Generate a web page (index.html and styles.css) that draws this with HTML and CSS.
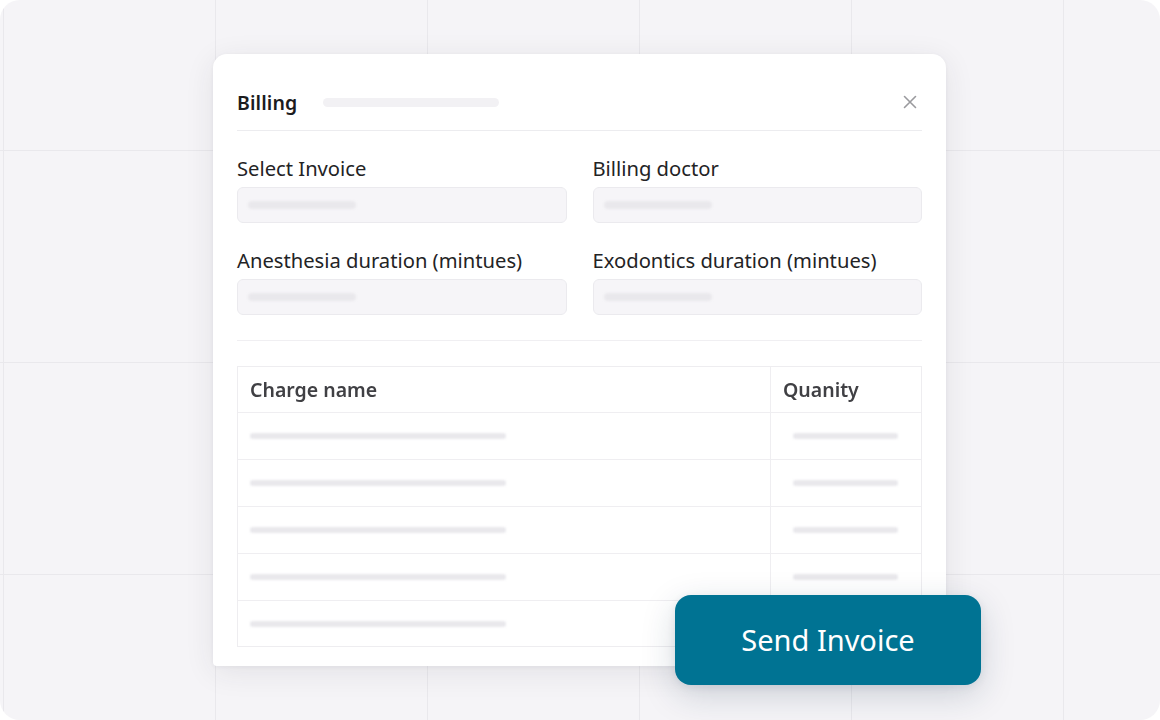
FILE: index.html
```html
<!DOCTYPE html>
<html>
<head>
<meta charset="utf-8">
<link rel="stylesheet" href="styles.css">
</head>
<body>
<div class="stage">
  <div class="modal">
    <div class="modal-head">
      <div class="title">Billing</div>
      <div class="title-bar"></div>
      <svg class="close" width="14" height="14" viewBox="0 0 14 14"><path d="M1.5 1.5L12.5 12.5M12.5 1.5L1.5 12.5" stroke="#9a9a9e" stroke-width="1.6" stroke-linecap="round"/></svg>
    </div>
    <div class="form">
      <div class="field">
        <div class="label">Select Invoice</div>
        <div class="input"><span class="ph"></span></div>
      </div>
      <div class="field">
        <div class="label">Billing doctor</div>
        <div class="input"><span class="ph"></span></div>
      </div>
      <div class="field">
        <div class="label">Anesthesia duration (mintues)</div>
        <div class="input"><span class="ph"></span></div>
      </div>
      <div class="field">
        <div class="label">Exodontics duration (mintues)</div>
        <div class="input"><span class="ph"></span></div>
      </div>
    </div>
    <div class="divider"></div>
    <div class="table">
      <div class="row head">
        <div class="cell name">Charge name</div>
        <div class="cell qty">Quanity</div>
      </div>
      <div class="row"><div class="cell name"><span class="bar"></span></div><div class="cell qty"><span class="bar"></span></div></div>
      <div class="row"><div class="cell name"><span class="bar"></span></div><div class="cell qty"><span class="bar"></span></div></div>
      <div class="row"><div class="cell name"><span class="bar"></span></div><div class="cell qty"><span class="bar"></span></div></div>
      <div class="row"><div class="cell name"><span class="bar"></span></div><div class="cell qty"><span class="bar"></span></div></div>
      <div class="row last"><div class="cell name"><span class="bar"></span></div><div class="cell qty"><span class="bar"></span></div></div>
    </div>
  </div>
  <button class="send">Send Invoice</button>
</div>
</body>
</html>
```
FILE: styles.css
```css
* { box-sizing: border-box; }
html, body { margin: 0; padding: 0; background: #ffffff; }
body { font-family: "Noto Sans", "Open Sans", sans-serif; }

.stage {
  position: relative;
  width: 1160px;
  height: 720px;
  border-radius: 20px;
  overflow: hidden;
  background-color: #f5f4f7;
  background-image:
    linear-gradient(to right, #e9e8ec 0, #e9e8ec 1px, transparent 1px),
    linear-gradient(to bottom, #e9e8ec 0, #e9e8ec 1px, transparent 1px);
  background-size: 212px 212px;
  background-position: 3px 150px;
  padding: 54px 0 0 213px;
}

.modal {
  width: 733px;
  height: 612px;
  background: #ffffff;
  border-radius: 14px 14px 4px 4px;
  box-shadow: 0 6px 30px rgba(40, 40, 60, 0.09), 0 1px 4px rgba(40, 40, 60, 0.05);
  padding: 0 24px;
}

.modal-head {
  height: 77px;
  display: flex;
  align-items: center;
  border-bottom: 1px solid #ececef;
  padding-top: 20px;
}
.title {
  font-size: 19.5px;
  font-weight: 600;
  color: #1c1c1e;
  letter-spacing: 0.1px;
}
.title-bar {
  width: 176px;
  height: 9px;
  border-radius: 5px;
  background: #f2f1f4;
  margin-left: 26px;
  filter: blur(0.6px);
}
.close { margin-left: auto; margin-right: 5px; }

.form {
  display: grid;
  grid-template-columns: 1fr 1fr;
  column-gap: 26px;
  row-gap: 24px;
  padding-top: 24px;
}
.label {
  font-size: 20.2px;
  color: #232325;
  line-height: 26px;
  margin-bottom: 6px;
}
.input {
  height: 36px;
  background: #f6f5f8;
  border: 1px solid #ebeaee;
  border-radius: 6px;
  display: flex;
  align-items: center;
  padding-left: 10px;
  filter: blur(0.4px);
}
.ph {
  width: 108px;
  height: 8px;
  border-radius: 4px;
  background: #e9e8ec;
  filter: blur(1px);
}

.divider {
  height: 1px;
  background: #f0eff2;
  margin-top: 25px;
  filter: blur(0.6px);
}

.table {
  margin-top: 25px;
  border: 1px solid #eeedf0;
  filter: blur(0.7px);
}
.row {
  display: flex;
  height: 47px;
  border-bottom: 1px solid #efeef1;
}
.row.head { height: 46px; }
.row.last { border-bottom: none; height: 45px; }
.cell {
  display: flex;
  align-items: center;
}
.cell.name {
  width: 533px;
  border-right: 1px solid #efeef1;
  padding-left: 12px;
}
.cell.qty {
  flex: 1;
  padding-left: 12px;
}
.row .cell.qty { padding-left: 22px; }
.row.head .cell.qty { padding-left: 12px; }
.head .cell {
  font-size: 19.5px;
  font-weight: 600;
  color: #404044;
}
.bar {
  height: 6px;
  border-radius: 3px;
  background: #e9e8ec;
  filter: blur(0.8px);
}
.cell.name .bar { width: 256px; }
.cell.qty .bar { width: 105px; }

.send {
  position: absolute;
  left: 675px;
  top: 595px;
  width: 306px;
  height: 90px;
  border: none;
  border-radius: 16px;
  background: #007393;
  color: #ffffff;
  font-family: "Noto Sans", "Open Sans", sans-serif;
  font-size: 29px;
  font-weight: 400;
  padding: 0 0 2px 0;
  box-shadow: 0 10px 34px rgba(20, 50, 80, 0.18), 0 2px 8px rgba(20, 50, 80, 0.08);
}
```
